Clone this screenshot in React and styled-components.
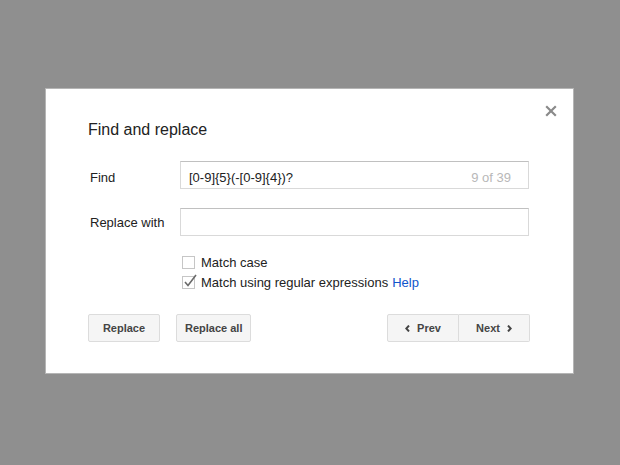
import React from "react";
import styled, { createGlobalStyle } from "styled-components";

const Global = createGlobalStyle`
  html, body { margin: 0; padding: 0; }
  body {
    background: #8f8f8f;
    font-family: "Liberation Sans", Arial, sans-serif;
  }
`;

const Page = styled.div`
  width: 620px;
  height: 465px;
  box-sizing: border-box;
  padding: 88px 0 0 45px;
`;

const Dialog = styled.div`
  position: relative;
  box-sizing: border-box;
  width: 529px;
  height: 286px;
  background: #fff;
  border: 1px solid #b5b5b5;
  padding: 31px 43px 0 43px;
  display: flex;
  flex-direction: column;
`;

const Close = styled.button`
  position: absolute;
  top: 16px;
  right: 16px;
  width: 12px;
  height: 12px;
  padding: 0;
  border: 0;
  background: none;
  display: flex;
  align-items: center;
  justify-content: center;
`;

const Title = styled.h1`
  margin: 0 0 21px -1px;
  font-size: 16px;
  line-height: 20px;
  font-weight: normal;
  color: #222;
`;

const FieldRow = styled.div`
  display: grid;
  grid-template-columns: 91px 349px;
  align-items: center;
  margin-bottom: ${(p) => p.$gap || 0}px;
`;

const Label = styled.label`
  font-size: 13px;
  color: #222;
  padding-left: 1px;
  padding-top: ${(p) => p.$drop || 0}px;
`;

const InputBox = styled.div`
  box-sizing: border-box;
  height: 28px;
  border: 1px solid #d9d9d9;
  border-top-color: #c0c0c0;
  display: flex;
  align-items: center;
  justify-content: space-between;
  padding: ${(p) => p.$drop || 0}px 17px 0 8px;
  font-size: 13px;
  color: #222;
`;

const Count = styled.span`
  color: #b8b8b8;
`;

const Options = styled.div`
  margin: 16px 0 0 93px;
  display: flex;
  flex-direction: column;
`;

const OptionRow = styled.div`
  height: 20px;
  display: flex;
  align-items: center;
  font-size: 13px;
  color: #222;
`;

const Box = styled.span`
  position: relative;
  box-sizing: border-box;
  width: 13px;
  height: 13px;
  border: 1px solid #c6c6c6;
  margin-right: 6px;
  flex: none;
`;

const Check = styled.svg`
  position: absolute;
  left: 0px;
  top: -3px;
`;

const Link = styled.a`
  color: #1155cc;
  text-decoration: none;
  margin-left: 4px;
`;

const ButtonBar = styled.div`
  margin: 22px 0 0 -1px;
  display: flex;
  align-items: center;
`;

const Group = styled.div`
  display: flex;
  margin-left: ${(p) => (p.$push ? "auto" : "0")};
  gap: ${(p) => p.$gap || 0}px;
`;

const Button = styled.button`
  box-sizing: border-box;
  height: 28px;
  min-width: ${(p) => p.$w || 72}px;
  padding: 0 8px;
  background: #f5f5f5;
  border: 1px solid #dcdcdc;
  border-radius: ${(p) => p.$radius || "2px"};
  ${(p) => (p.$joinLeft ? "border-left: 0;" : "")}
  font-family: "Liberation Sans", Arial, sans-serif;
  font-size: 11px;
  font-weight: bold;
  color: #444;
  display: flex;
  align-items: center;
  justify-content: center;
  gap: 7px;
`;

const Chevron = ({ dir }) => (
  <svg width="5" height="7" viewBox="0 0 5 7">
    <path
      d={dir === "left" ? "M4 0.6 L1.3 3.5 L4 6.4" : "M1 0.6 L3.7 3.5 L1 6.4"}
      fill="none"
      stroke="#444"
      strokeWidth="2"
    />
  </svg>
);

export default function App() {
  return (
    <>
      <Global />
      <Page>
        <Dialog>
          <Close aria-label="Close">
            <svg width="12" height="12" viewBox="0 0 12 12">
              <path d="M1.2 1.2 L10.8 10.8 M10.8 1.2 L1.2 10.8" stroke="#8a8a8a" strokeWidth="2.2" />
            </svg>
          </Close>
          <Title>Find and replace</Title>
          <FieldRow $gap={19}>
            <Label $drop={5}>Find</Label>
            <InputBox $drop={5}>
              <span>[0-9]{"{5}"}(-[0-9]{"{4}"})?</span>
              <Count>9 of 39</Count>
            </InputBox>
          </FieldRow>
          <FieldRow>
            <Label>Replace with</Label>
            <InputBox />
          </FieldRow>
          <Options>
            <OptionRow>
              <Box />
              Match case
            </OptionRow>
            <OptionRow>
              <Box>
                <Check width="15" height="14" viewBox="0 0 15 14">
                  <path d="M2 8 L5 11.5 L13 1" fill="none" stroke="#6a6a6a" strokeWidth="1.6" />
                </Check>
              </Box>
              Match using regular expressions
              <Link href="#">Help</Link>
            </OptionRow>
          </Options>
          <ButtonBar>
            <Group $gap={16}>
              <Button>Replace</Button>
              <Button $w={74}>Replace all</Button>
            </Group>
            <Group $push>
              <Button $radius="2px 0 0 2px">
                <Chevron dir="left" />
                Prev
              </Button>
              <Button $w={71} $radius="0 2px 2px 0" $joinLeft>
                Next
                <Chevron dir="right" />
              </Button>
            </Group>
          </ButtonBar>
        </Dialog>
      </Page>
    </>
  );
}
